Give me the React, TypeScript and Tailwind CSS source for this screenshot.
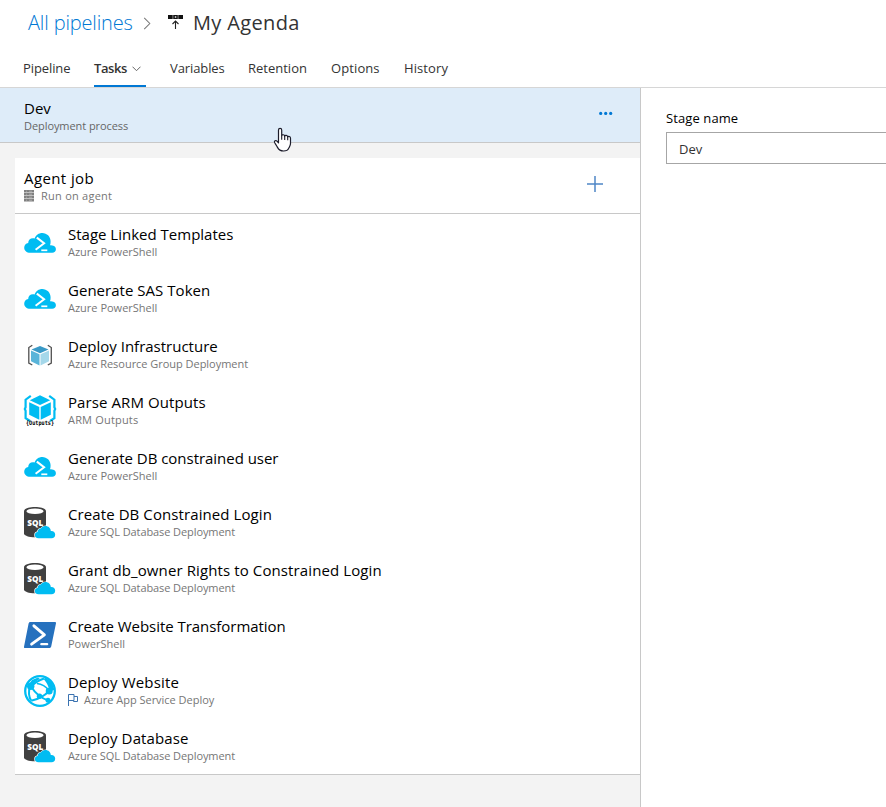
import type { ReactNode } from "react";

function CloudShell() {
  return (
    <svg viewBox="0 0 32 32" className="h-8 w-8">
      <path
        d="M6.2 25.7C2.600 25.700.2 23.600.2 20.700c0-2.500 1.700-4.300 4-4.700 0-2.800 2-4.800 4.700-4.800.6 0 1.200.1 1.700.3C11.800 8.200 14.800 6 18.300 6c4.600 0 8.200 3.600 8.300 8.200 0 1.500-.1 2.800-.6 4.100 1-.2 2.300-.1 3.400.5 1.500.6 2.500 1.800 2.500 3.500 0 2.100-1.500 3.400-3.700 3.400z"
        fill="#00bcf2"
      />
      <path d="M12.800 10.600l7.300 5.700-8.500 6.400" fill="none" stroke="#fff" strokeWidth="2" />
      <path d="M17.300 23.300h6" stroke="#fff" strokeWidth="1.700" />
    </svg>
  );
}

function ResourceGroup() {
  return (
    <svg viewBox="0 0 32 32" className="h-8 w-8">
      <path d="M8.300 6.300L4.800 8.500v15.500l3.500 2M23.800 6.300L27.300 8.500v15.500l-3.500 2" fill="none" stroke="#505050" strokeWidth="1.300" />
      <path d="M16 7l8.500 3.500-8.500 3.800-8.500-3.800z" fill="#3999c6" />
      <path d="M7 11.400l8.500 3.800v11.300L7 22.300z" fill="#59b4d9" />
      <path d="M25 11.400l-8.500 3.800v11.300l8.500-4.200z" fill="#a5d8ea" />
    </svg>
  );
}

function ArmOutputs() {
  return (
    <svg viewBox="0 0 32 32" className="h-8 w-8 overflow-visible">
      <path d="M6.800.9L1.600 4.700v7.500L.8 14l.8 1.800v7.300L6 26M25.200.9l5.200 3.800v7.500l.8 1.800-.8 1.800v7.300L26 26" fill="none" stroke="#00bcf2" strokeWidth="2.200" />
      <path d="M16 .3l10.200 5L16 10.100 5.800 5.300z" fill="#00bcf2" />
      <path d="M5.200 7.200l10.100 4.900v12.700L5.200 19.700z" fill="#00bcf2" />
      <path d="M26.800 7.200l-10.100 4.900v12.700l10.100-5.100z" fill="#00bcf2" />
      <text x="16" y="30.200" textAnchor="middle" textLength="28" lengthAdjust="spacingAndGlyphs" fontSize="6.200" fontWeight="700" fill="#000" fontFamily="'DejaVu Sans Mono', monospace">
        {"{Outputs}"}
      </text>
    </svg>
  );
}

function SqlDatabase() {
  return (
    <svg viewBox="0 0 32 32" className="h-8 w-8">
      <path d="M0 4.200C0 1.700 4.800 0 11 0s11 1.700 11 4.200v22C22 28.700 17.200 30.200 11 30.200S0 28.700 0 26.200z" fill="#404040" />
      <ellipse cx="11" cy="4.200" rx="8.600" ry="2.800" fill="#fff" />
      <text x="11.200" y="19.300" textAnchor="middle" textLength="16" lengthAdjust="spacingAndGlyphs" fontSize="9.500" fontWeight="800" fill="#fff" fontFamily="'Open Sans', sans-serif">
        SQL
      </text>
      <path
        d="M14.500 31.200c-2.300 0-3.700-1.400-3.700-3.200 0-1.700 1.200-2.900 2.800-3.100.1-2.200 1.500-3.500 3.300-3.400.9-1.500 2.500-2.500 4.500-2.500 3.100 0 5.300 2.300 5.400 5.100 2.600-.3 4.400 1.500 4.400 3.600 0 2-1.400 3.500-3.600 3.500z"
        fill="#00bcf2"
        stroke="#fff"
        strokeWidth="1.200"
        paintOrder="stroke"
      />
    </svg>
  );
}

function PowerShell() {
  return (
    <svg viewBox="0 0 32 32" className="h-8 w-8">
      <path d="M6.300 3H31c.8 0 1.200.5 1 1.300l-4.800 23.200c-.2.900-.9 1.500-1.800 1.500H1c-.8 0-1.200-.5-1-1.300L4.600 4.500C4.800 3.600 5.400 3 6.300 3z" fill="#2671be" />
      <path d="M9.900 6.800l10.500 9.100L7.600 25.100" fill="none" stroke="#fff" strokeWidth="2.900" strokeLinecap="round" strokeLinejoin="round" />
      <path d="M17.300 25.200h5.900" stroke="#fff" strokeWidth="2.200" strokeLinecap="round" />
    </svg>
  );
}

function WebSite() {
  return (
    <svg viewBox="0 0 32 32" className="h-8 w-8">
      <circle cx="16" cy="16" r="14.800" fill="#fff" />
      <path d="M3 12L8 5l6-2.500 2 1.500C12.500 5.500 10 8 8.500 11z" fill="#00bcf2" />
      <path d="M22 2.800l6 5 2.500 7-2.500 1-3.500-3.500c-1-3-2.500-5.500-5-8.500z" fill="#00bcf2" />
      <path d="M7 11.500c3.500 5.500 9 11.500 17.500 14M25.200 16c-4.500 4.500-10 8.300-18 9.800M6 11c-1.500 5-1.500 10 1 14.500M20 3.500C14.500 5.500 10 8.500 7 11.500" fill="none" stroke="#00bcf2" strokeWidth="2" />
      <path d="M13 8.500c4.500.5 8.500 2.500 12 7" fill="none" stroke="#00bcf2" strokeWidth="1.700" />
      <circle cx="16" cy="16" r="14.800" fill="none" stroke="#00bcf2" strokeWidth="2.300" />
      <circle cx="6.700" cy="11.300" r="3.700" fill="#00bcf2" />
      <circle cx="25.200" cy="15.900" r="3.500" fill="#00bcf2" />
      <circle cx="15.500" cy="21.300" r="2.700" fill="#00bcf2" />
      <circle cx="24" cy="25.300" r="2.500" fill="#00bcf2" />
    </svg>
  );
}

function FlagIcon() {
  return (
    <svg viewBox="0 0 11 12" className="mr-[5px] h-3 w-[11px]">
      <path d="M.5 12V.5h5.500v6H.5M6 2.500h3.500v5H5.500V6.500" fill="none" stroke="#3a72b0" strokeWidth="1" />
    </svg>
  );
}

function ServerIcon() {
  return (
    <svg viewBox="0 0 10 12" className="mr-[7px] h-3 w-[10px]">
      <path d="M0 0h10v2.500H0zM0 3h10v2.500H0zM0 6h10v2.500H0zM0 9h10v2.500H0z" fill="#808080" />
      <path d="M2 1.200h1M5 1.200h3M2 4.200h1M5 4.200h3M2 7.200h1M5 7.200h3M2 10.200h1M5 10.200h3" stroke="#c9c9c9" strokeWidth=".6" />
    </svg>
  );
}

function PointerCursor() {
  return (
    <svg viewBox="0 0 19 25" className="absolute left-[273px] top-[127px] h-[25px] w-[19px]">
      <path
        d="M5.500 3c0-2.200 3.200-2.200 3.200 0v5.600c.3-1.300 2.800-1.100 3 .5.500-1.200 2.800-.9 3 .8.700-1 2.800-.6 2.800 1.300v5.300c0 2-1 3.200-1.700 4.600-.7 1.800-2.300 2.900-5.300 2.900-3.200 0-4.800-1.300-6-3.600-.8-1.600-1.800-3-2.800-4.600-1-1.700 1-3 2.300-1.700l1.500 1.700z"
        fill="#fff"
        stroke="#1c1c2b"
        strokeWidth="1.200"
        strokeLinejoin="round"
      />
      <path d="M8.700 8.500v4.200M11.700 9v3.900M14.700 10v3.200" stroke="#1c1c2b" strokeWidth="1.100" />
    </svg>
  );
}

type Task = { title: string; kind: string; icon: ReactNode; flag?: boolean; titleSpacing?: string; kindSpacing?: string };

const sqlKind = { kind: "Azure SQL Database Deployment", kindSpacing: "tracking-[-0.09px]" };

const tasks: Task[] = [
  { title: "Stage Linked Templates", kind: "Azure PowerShell", icon: <CloudShell /> },
  { title: "Generate SAS Token", kind: "Azure PowerShell", icon: <CloudShell />, titleSpacing: "tracking-[0.03px]" },
  { title: "Deploy Infrastructure", kind: "Azure Resource Group Deployment", icon: <ResourceGroup />, kindSpacing: "tracking-[-0.03px]" },
  { title: "Parse ARM Outputs", kind: "ARM Outputs", icon: <ArmOutputs />, titleSpacing: "tracking-[0.09px]", kindSpacing: "tracking-[0.18px]" },
  { title: "Generate DB constrained user", kind: "Azure PowerShell", icon: <CloudShell />, titleSpacing: "tracking-[-0.03px]" },
  { title: "Create DB Constrained Login", ...sqlKind, icon: <SqlDatabase />, titleSpacing: "tracking-[0.09px]" },
  { title: "Grant db_owner Rights to Constrained Login", ...sqlKind, icon: <SqlDatabase />, titleSpacing: "tracking-[0.11px]" },
  { title: "Create Website Transformation", kind: "PowerShell", icon: <PowerShell />, titleSpacing: "tracking-[-0.04px]" },
  { title: "Deploy Website", kind: "Azure App Service Deploy", icon: <WebSite />, flag: true, titleSpacing: "tracking-[0.15px]", kindSpacing: "tracking-[-0.02px]" },
  { title: "Deploy Database", ...sqlKind, icon: <SqlDatabase />, titleSpacing: "tracking-[0.13px]" },
];

function TaskRow({ title, kind, icon, flag, titleSpacing = "", kindSpacing = "" }: Task) {
  return (
    <li className="flex h-14 pl-[9px] pt-[13px]">
      {icon}
      <div className="-mt-[3px] ml-3">
        <div className={`whitespace-nowrap text-[15px] leading-5 text-black ${titleSpacing}`}>{title}</div>
        <div className={`flex items-center whitespace-nowrap text-[11px] leading-4 text-[#767676] ${kindSpacing}`}>
          {flag && <FlagIcon />}
          {kind}
        </div>
      </div>
    </li>
  );
}

export default function App() {
  return (
    <div className="relative flex h-[807px] w-[886px] flex-col overflow-hidden bg-white font-['Open_Sans',sans-serif]">
      <header className="h-[88px] shrink-0 border-b border-[#d6d6d6]">
        <div className="flex h-[46px] items-center pl-7 text-[20px] text-[#333]">
          <a className="w-[104px] whitespace-nowrap font-light tracking-[-0.15px] text-[#0078d4]">All pipelines</a>
          <svg viewBox="0 0 8 14" className="ml-[11px] h-[13px] w-2">
            <path d="M1 1l6 6-6 6" fill="none" stroke="#777" strokeWidth="1.100" />
          </svg>
          <svg viewBox="0 0 15 15" className="-mt-[1px] ml-[17px] h-[15px] w-[15px]">
            <path d="M0 0h4.700v4H0zM5.200 0h4.600v4H5.200zM10.300 0H15v4h-4.700z" fill="#111" />
            <path d="M6.800 1.300h1.500v1.400H6.800z" fill="#fff" />
            <path d="M7.500 14V6.200M4.500 9l3-3 3 3" fill="none" stroke="#222" strokeWidth="1.100" />
          </svg>
          <h1 className="ml-[10px] whitespace-nowrap tracking-[0.35px]">My Agenda</h1>
        </div>
        <nav className="flex h-[41px] pl-[23px] text-[13px] leading-[44px] text-[#333]">
          <a className="w-[71px] tracking-[-0.1px]">Pipeline</a>
          <a className="mr-6 flex w-[52px] items-start border-b-2 border-[#0078d4] font-semibold">
            <span className="w-[38px] tracking-[-0.4px]">Tasks</span>
            <svg viewBox="0 0 9 6" className="mt-[20px] h-[6px] w-[9px]">
              <path d="M.5.700l4 4 4-4" fill="none" stroke="#666" />
            </svg>
          </a>
          <a className="w-[78px] tracking-[-0.1px]">Variables</a>
          <a className="w-[83px]">Retention</a>
          <a className="w-[73px] tracking-[0.1px]">Options</a>
          <a className="tracking-[0.1px]">History</a>
        </nav>
      </header>
      <main className="flex min-h-0 flex-1">
        <section className="w-[641px] shrink-0 border-r border-[#c8c8c8] bg-[#f3f3f3]">
          <div className="flex h-[55px] justify-between border-b border-[#c8c8c8] bg-[#deecf9] pl-6 pr-[27px] pt-[10px]">
            <div>
              <div className="text-[15px] leading-5 text-black">Dev</div>
              <div className="text-[11px] leading-4 tracking-[-0.07px] text-[#666]">Deployment process</div>
            </div>
            <svg viewBox="0 0 14 4" className="mt-[13px] h-1 w-[14px]">
              <g fill="#0078d4">
                <circle cx="1.700" cy="2.400" r="1.600" />
                <circle cx="6.700" cy="2.400" r="1.600" />
                <circle cx="11.700" cy="2.400" r="1.600" />
              </g>
            </svg>
          </div>
          <div className="ml-[15px] mt-[15px] border-b border-[#c8c8c8] bg-white">
            <div className="flex h-14 justify-between border-b border-[#c8c8c8] pl-[9px] pr-[37px] pt-[10px]">
              <div>
                <div className="text-[15px] leading-5 tracking-[0.4px] text-black">Agent job</div>
                <div className="flex items-center text-[11px] leading-4 tracking-[0.25px] text-[#767676]">
                  <ServerIcon />
                  Run on agent
                </div>
              </div>
              <svg viewBox="0 0 16 16" className="mt-2 h-4 w-4">
                <path d="M0 8h16M8 0v16" stroke="#4f86c6" strokeWidth="1.500" />
              </svg>
            </div>
            <ul>
              {tasks.map((task) => (
                <TaskRow key={task.title} {...task} />
              ))}
            </ul>
          </div>
        </section>
        <section className="flex-1 pl-[25px] pt-5">
          <label className="block text-[13px] leading-5 tracking-[0.1px] text-black">Stage name</label>
          <div className="mt-1 h-8 border border-r-0 border-[#a6a6a6] pl-3 text-[13px] leading-[32px] text-[#333]">Dev</div>
        </section>
      </main>
      <PointerCursor />
    </div>
  );
}
